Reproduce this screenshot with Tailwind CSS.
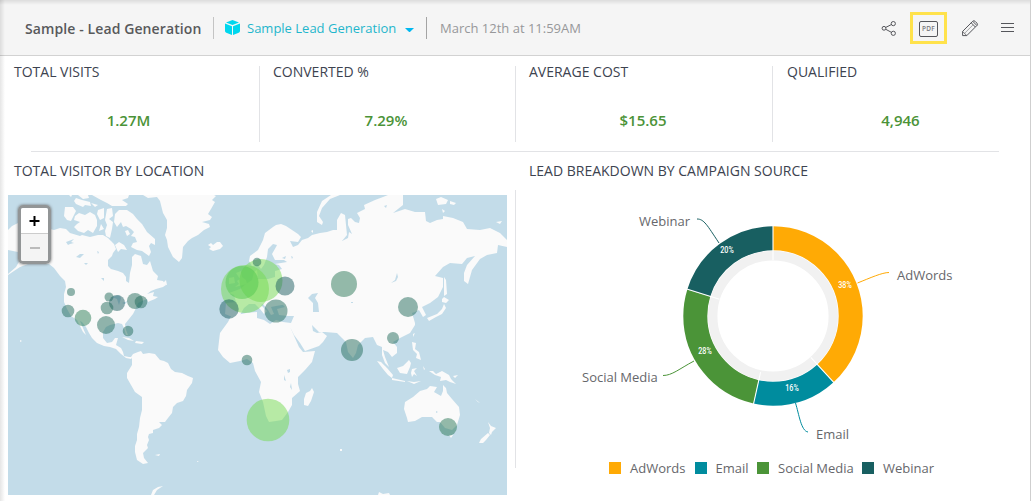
<!DOCTYPE html>
<html lang="en">
<head>
<meta charset="utf-8">
<title>Sample - Lead Generation</title>
<script src="https://cdn.jsdelivr.net/npm/@tailwindcss/browser@4"></script>
</head>
<body class="relative h-[501px] w-[1031px] overflow-hidden border-r border-[#cfcfcf] bg-white font-['Open_Sans',sans-serif]">
<header class="flex h-14 items-center border-b border-[#d2d2d2] bg-[#f5f5f5] pl-[25px] pr-4">
  <h1 class="w-[188px] whitespace-nowrap pt-px text-[14px] font-semibold tracking-[0.1px] text-[#58595b]">Sample - Lead Generation</h1>
  <span class="h-[22px] w-px bg-[#c4c4c4]"></span>
  <svg class="ml-[11px] size-[15px]" viewBox="0 0 15 15" fill="#00d7ee"><path d="M7.5 0 14 2.5 7.5 5 1 2.5ZM0 3.6 7 6.2V15L1.3 12.7Q0 12 0 11ZM15 3.6 8 6.2V15L13.7 12.7Q15 12 15 11Z"/></svg>
  <span class="ml-[7px] w-[150px] whitespace-nowrap pt-0.5 text-[13px] text-[#1fb6cc]">Sample Lead Generation</span>
  <svg class="ml-2 mt-1 h-1 w-[9px]" viewBox="0 0 9 4" fill="#00b8f0"><path d="M0 0H9L5.2 3.7Q4.5 4.2 3.8 3.7Z"/></svg>
  <span class="ml-3 h-[22px] w-px bg-[#a4a4a4]"></span>
  <span class="ml-[13px] whitespace-nowrap pt-0.5 text-[13px] text-[#97989a]">March 12th at 11:59AM</span>
  <div class="ml-auto flex items-center text-[#55565b]">
    <svg class="size-4" viewBox="0 0 16 16" fill="none" stroke="currentColor"><circle cx="3" cy="8.3" r="1.9"/><circle cx="12.3" cy="3.6" r="2.1"/><circle cx="12.3" cy="13.3" r="2.1"/><path d="M4.8 7.4 10.3 4.6M4.8 9.3 10.3 12.3"/></svg>
    <div class="ml-[13px] flex h-8 w-[37px] items-center justify-center border-3 border-[#ffe24b]">
      <span class="mt-0.5 flex h-4 w-[19px] items-center justify-center rounded-xs border border-[#55565b] pt-0.5 text-[6.5px] font-semibold leading-none tracking-[0.2px] text-[#77787c]">PDF</span>
    </div>
    <svg class="ml-[14px] size-[18px]" viewBox="0 0 18 18" fill="none" stroke="currentColor"><path d="M1.6 16.6V12.4L11.7 2.3Q12.9 1.1 14.1 2.3L15.9 4.1Q17.1 5.3 15.9 6.5L5.8 16.6ZM10.2 3.8 14.4 8M11.7 2.3 15.9 6.5"/><path d="M1.6 12.4 5.8 16.6" stroke-width=".8"/><path d="M3.7 14.2 12 5.9" stroke-width=".5"/></svg>
    <svg class="ml-[22px] h-[11px] w-[13px]" viewBox="0 0 13 11" stroke="currentColor"><path d="M0 1.5H13M0 5.5H13M0 9.5H13"/></svg>
  </div>
</header>

<main>
  <section class="flex h-[95px] pt-2.5 text-[#3d4350]">
    <div class="h-[76px] w-[260px] border-r border-[#e2e3e6]"><h2 class="-mt-1 pl-3.5 text-[14px] leading-5">TOTAL VISITS</h2><p class="mt-[26px] pr-0.5 text-center text-[15px] font-semibold leading-6 text-[#4b9338]">1.27M</p></div>
    <div class="h-[76px] w-[256px] border-r border-[#e2e3e6]"><h2 class="-mt-1 pl-[13px] text-[14px] leading-5">CONVERTED %</h2><p class="mt-[26px] pr-[3px] text-center text-[15px] font-semibold leading-6 text-[#4b9338]">7.29%</p></div>
    <div class="h-[76px] w-[257px] border-r border-[#e2e3e6]"><h2 class="-mt-1 pl-[13px] text-[14px] leading-5">AVERAGE COST</h2><p class="mt-[26px] pr-0.5 text-center text-[15px] font-semibold leading-6 text-[#4b9338]">$15.65</p></div>
    <div class="h-[76px] w-[257px]"><h2 class="-mt-1 pl-3.5 text-[14px] leading-5">QUALIFIED</h2><p class="mt-[26px] pr-0.5 text-center text-[15px] font-semibold leading-6 text-[#4b9338]">4,946</p></div>
  </section>
  <hr class="ml-[31px] w-[968px] border-[#e2e3e6]">
  <section class="flex">
    <div class="w-[515px]">
      <h2 class="mt-[9px] h-[34px] pl-3.5 text-[14px] leading-5 text-[#3d4350]">TOTAL VISITOR BY LOCATION</h2>
      <div class="relative ml-2 h-[300px] w-[499px] bg-[#c3dce9]">
        <svg class="block" width="499" height="300" viewBox="8 195 499 300">
          <g fill="#fafafa">
            <!-- North America -->
            <path d="M8 230 12 226 18 223 32 224 44 230 50 229 54 230 60 228 66 229 70 233 80 236 82 235 90 237 98 235 103 235 108 238 111 241 114 244 116 249 113 253 112 256 108 260 108 266 111 269 118 271 123 273 126 277 126 281 129 283 130 273 132 265 132 257 135 254 141 256 143 264 147 265 150 261 153 271 158 276 157 280 163 281 166 285 163 287 156 289 151 291 147 294 154 292 153 296 158 297 155 299 150 301 148 302 147 299 142 301 138 303 136 308 133 314 129 319 125 324 126 330 128 335 126 335 124 328 122 324 118 323 114 324 110 325 106 327 103 332 103 338 107 343 112 342 115 338 118 338 116 345 121 348 123 352 124 356 129 357 132 357 131 359 126 358 121 354 116 349 110 347 104 346 97 343 92 338 89 333 86 327 82 322 80 321 83 328 86 335 83 332 80 326 77 320 71 316 67 309 64 302 64 294 66 287 65 281 60 276 54 268 49 264 42 263 35 262 28 264 20 267 14 271 8 275 8 274 16 267 20 260 18 252 8 250Z"/>
            <path d="M65 207 73 207 76 211 74 215 71 221 67 220 64 216ZM75 216 79 213 85 215 90 212 95 215 97 220 97 226 93 233 88 230 84 233 78 231 74 227 77 224 80 222 74 220ZM69 195H72L71 197ZM76 198 82 200 90 202 91 206 85 205 83 207 76 204 74 201ZM78 195H88L89 198 83 199ZM91 203 98 205 95 207ZM98 210 104 208 104 218 100 220 97 214ZM107 209 112 208 113 216 109 219 113 222 112 229 110 238 106 236 105 231 107 225 105 220ZM101 224 104 229 99 231ZM115 214 119 210 127 210 133 214 137 219 142 224 147 232 155 239 155 245 151 243 149 246 151 252 149 256 142 251 137 250 131 247 133 243 137 242 135 237 131 236 134 232 131 229 126 226 123 227 121 222 117 227 114 222ZM115 245 119 242 124 245 127 250 121 249 118 252ZM125 231 128 230 130 234 127 236ZM92 195H129L128 198 122 200 128 204 126 206 112 206 107 203 101 200Z"/>
            <path d="M162 284 166 280 167 285ZM122 337 129 338 134 341 128 340ZM136 341 144 342 142 344 135 343Z"/>
            <!-- Greenland, Iceland -->
            <path d="M143 195 148 198 157 197 160 201 162 209 163 213 167 220 167 228 165 235 167 240 168 247 173 257 179 262 182 258 183 247 188 241 192 238 198 235 204 230 210 227 209 224 202 222 210 220 212 217 208 214 211 209 215 202 212 200 216 196 214 195Z"/>
            <path d="M208 245 211 243 213 245 217 242 220 242 223 246 220 249 213 251 209 249 211 247Z"/>
            <!-- South America -->
            <path d="M131 357 133 354 138 352 141 351 143 354 149 353 155 354 160 360 164 361 168 363 171 369 175 372 182 373 188 376 193 378 192 383 187 390 186 396 183 401 177 403 173 407 172 413 168 418 165 422 159 422 162 425 159 428 153 430 153 433 149 434 148 437 149 440 147 445 148 448 143 453 144 458 148 463 143 464 137 460 135 452 135 446 137 440 137 434 139 427 140 418 142 410 142 397 135 392 131 385 127 378 127 373 132 365 132 359ZM155 455 160 454 159 456ZM151 495 153 490 158 487 163 486 157 490 154 495Z"/>
            <!-- Europe, Asia and Africa -->
            <path d="M250 256 258 250 260 246 263 240 265 233 273 227 276 225 281 224 286 226 292 230 298 234 301 237 298 242 290 241 293 247 298 245 302 240 308 238 312 235 320 233 327 232 333 230 337 230 337 220 341 213 345 215 346 225 347 235 342 241 348 238 349 232 352 234 348 225 348 219 351 218 355 222 359 223 360 218 357 213 365 209 364 205 375 200 383 197 388 195H403L403 205 393 213 405 209 415 212 425 212 426 221 430 223 437 220 443 219 443 216 453 218 463 222 467 229 480 230 490 228 500 233 507 240V247L498 245 497 253 487 255 480 259 472 270 468 284 464 281 464 273 467 265 475 256 467 258 462 264 450 263 443 267 435 276 443 278 443 287 438 297 430 303 422 307 426 315 423 317 419 310 415 312 412 313 415 323 415 325 410 333 400 338 393 342 397 347 397 353 392 357 388 352 383 350 385 357 389 367 385 363 382 355 382 347 377 345 373 337 365 338 358 345 356 353 353 358 348 352 346 342 342 338 337 333 325 332 319 332 312 325 313 331 317 333 322 332 327 336 323 342 319 346 305 351 300 343 294 335 290 327 295 338 299 347 303 352 315 351 312 362 305 370 298 377 298 384 300 391 292 398 292 405 288 412 282 420 276 421 269 422 266 416 263 402 259 392 261 382 255 371 253 363 247 359 240 361 230 363 223 357 218 350 219 341 220 333 228 322 231 316 237 315 246 313 257 312 257 318 264 320 270 324 276 320 283 322 291 323 294 316 288 316 279 315 277 309 285 307 282 304 283 298 288 297 292 293 291 297 295 300 300 302 299 305 291 304 282 305 276 306 271 307 274 314 271 315 268 310 263 304 261 305 267 311 264 314 260 309 255 304 249 304 244 308 240 315 230 316 225 314 226 303 236 302 234 295 229 293 240 289 246 284 252 280 254 272 257 270 258 279 268 279 275 277 275 271 282 269 279 265 275 264 287 262 284 260 275 260 272 254 276 247 277 245 273 244 268 249 267 257 264 265 261 269 258 265 252 266 249 261Z"/>
            <path d="M235 287 239 284 237 281 240 279 236 273 241 271 242 277 246 280 247 284ZM229 278 234 277 235 283 229 284ZM317 222 322 225 323 222 319 216 322 208 330 199 340 195H331L322 201 317 212ZM436 199 441 197 448 200 446 204 438 205ZM450 201 456 203 454 205 450 204ZM442 209 445 211 443 213ZM496 222 502 221 500 224ZM311 231 313 230 313 233Z"/>
            <path d="M444 277 446 280 447 294 444 296ZM442 299 444 297 449 300 446 303 442 302ZM444 304 446 308 442 314 436 317 429 321 427 318 437 314 442 309ZM413 334 415 333 413 337ZM412 342 416 343 415 349 419 352 421 360 416 358 417 354 413 350Z"/>
            <!-- Southeast Asia and Oceania -->
            <path d="M377 361 381 362 387 368 393 375 392 378 388 375 383 369ZM392 378 405 381 405 382 392 380ZM397 368 403 366 409 360 411 363 410 367 407 374 400 373ZM412 369 417 368 414 371 417 376 414 374 412 377 411 373ZM407 381 414 382 421 381 414 384ZM423 366 425 369 424 370ZM429 371 433 371 436 374 442 371 449 375 451 379 456 384 450 382 446 380 440 381 441 377 435 375ZM453 376 458 375 455 378Z"/>
            <path d="M405 402 413 397 420 391 427 389 430 386 437 387 434 392 441 396 443 391 443 385 446 388 447 393 452 399 459 407 460 415 457 425 452 430 445 428 440 422 437 422 432 417 422 417 415 421 408 422 407 418 404 409ZM449 435 453 435 451 438ZM488 422 491 426 496 428 492 432 491 435 489 433 490 428ZM488 433 490 435 486 440 483 443 479 443 481 439ZM312 388 314 392 311 401 308 406 304 405 304 399 306 393 310 391Z"/>
            <path d="M378 495 379 492 383 494 389 493 390 495ZM475 399 480 403 478 402ZM340 449H342V451H340ZM20 340 22 341 20 342ZM197 461 199 462H197Z"/>
          </g>
          <g fill="#c3dce9">
            <path d="M312 294 318 293 315 298 318 303 319 312 313 312 313 303 308 298ZM391 283 395 280 397 273 398 277 396 281ZM66 242 74 239 71 242 74 243 70 244 68 245ZM76 257 80 254 84 254 80 258ZM84 263 88 263 86 265ZM97 251 99 252 98 254ZM101 278 104 278 104 281ZM112 297 119 295 121 298 119 305 117 299ZM122 303 128 301 125 304ZM287 370 290 369 290 372 288 373ZM284 375 286 381 284 380ZM291 383 292 390 290 387ZM282 258 286 256 285 259ZM291 256 293 257 292 259ZM384 206 387 205 386 208ZM351 302H353V303H351ZM436 411 438 412 436 413Z"/>
          </g>
          <g fill="#74da50" fill-opacity=".5">
            <circle cx="245" cy="289" r="24"/><circle cx="261" cy="280.5" r="21.5"/><circle cx="268" cy="420" r="21.3"/><circle cx="242" cy="282.5" r="16.5" fill="#54c850"/>
          </g>
          <g fill="#246c5c" fill-opacity=".5">
            <circle cx="71" cy="292" r="4"/><circle cx="68" cy="311" r="6.3"/><circle cx="83" cy="318" r="8.3" fill="#2c7d55"/><circle cx="109" cy="297" r="4.5"/><circle cx="117" cy="303" r="8" fill="#1c5c60"/><circle cx="107" cy="308" r="6.3"/><circle cx="135" cy="301" r="8"/><circle cx="141" cy="302" r="6.3"/><circle cx="106" cy="325" r="9"/><circle cx="128" cy="331" r="5.3"/><circle cx="247" cy="360" r="5.3"/><circle cx="229" cy="309" r="9.7" fill="#1c5c60"/><circle cx="257" cy="262" r="4.3"/><circle cx="285" cy="286" r="9.5" fill="#1c5c60"/><circle cx="276" cy="311" r="11.5"/><circle cx="344" cy="284" r="13" fill="#2c7858"/><circle cx="408" cy="307" r="10"/><circle cx="352" cy="350" r="11"/><circle cx="393" cy="338" r="6"/><circle cx="448" cy="427" r="9" fill="#2c7858"/>
          </g>
        </svg>
        <div class="absolute left-[10px] top-[10px] flex h-[59px] w-[33px] flex-col overflow-hidden rounded-[5px] border-3 border-[#929596] shadow-[0_0_3px_#666]">
          <span class="flex h-[26px] items-center justify-center border-b border-[#ccc] bg-white"><svg class="size-[11px]" viewBox="0 0 11 11" stroke="#000" stroke-width="2"><path d="M.5 6H10.5M5.5 1V11"/></svg></span>
          <span class="flex flex-1 items-center justify-center bg-[#f4f4f4]"><svg class="h-0.5 w-[10px]" viewBox="0 0 10 2"><path d="M0 1H10" stroke="#bbb" stroke-width="2"/></svg></span>
        </div>
      </div>
    </div>
    <div class="mt-[38px] h-[278px] w-px bg-[#e2e3e6]"></div>
    <div class="flex-1">
      <h2 class="mt-[9px] h-[34px] pl-[13px] text-[14px] leading-5 text-[#3d4350]">LEAD BREAKDOWN BY CAMPAIGN SOURCE</h2>
      <svg class="block" width="514" height="260" viewBox="516 195 514 260">
        <g fill="none" stroke-width="24" transform="rotate(-90 773 316)">
          <circle cx="773" cy="316" r="77.7" pathLength="100" stroke="#ffaa05" stroke-dasharray="38.2 61.8"/>
          <circle cx="773" cy="316" r="77.7" pathLength="100" stroke="#008c9e" stroke-dasharray="15.3 84.7" stroke-dashoffset="-38.2"/>
          <circle cx="773" cy="316" r="77.7" pathLength="100" stroke="#4b9438" stroke-dasharray="26.3 73.7" stroke-dashoffset="-53.5"/>
          <circle cx="773" cy="316" r="77.7" pathLength="100" stroke="#185f61" stroke-dasharray="20.2 79.8" stroke-dashoffset="-79.8"/>
        </g>
        <circle cx="773" cy="316" r="60.3" fill="none" stroke="#f1f1f1" stroke-width="9.4"/>
        <path d="M773 260V225M810.8 357.3 834.2 382.8M760.6 372.2 753.3 405M719.5 299.3 686 288.8" stroke="#fff" stroke-width="1.1"/>
        <g fill="none">
          <path d="M697 219C704 219 707 225 719 243" stroke="#185f61"/>
          <path d="M663 375.5C672 375.5 679 369 694 361" stroke="#4b9438"/>
          <path d="M857.5 283C870 278 882 272.5 889 272.5" stroke="#ffaa05"/>
          <path d="M795.5 403C799 414 801 431 808 432" stroke="#008c9e"/>
        </g>
        <g class="text-[13px]" fill="#66676b">
          <text x="639" y="226">Webinar</text><text x="582" y="382">Social Media</text><text x="897" y="280">AdWords</text><text x="816" y="439">Email</text>
        </g>
        <g class="font-['Roboto'] text-[8.5px] font-medium" fill="#fff" text-anchor="middle">
          <text x="727" y="253" textLength="13.5" lengthAdjust="spacingAndGlyphs">20%</text><text x="705" y="354" textLength="13.5" lengthAdjust="spacingAndGlyphs">28%</text><text x="845" y="288" textLength="13.5" lengthAdjust="spacingAndGlyphs">38%</text><text x="792" y="391" textLength="13.5" lengthAdjust="spacingAndGlyphs">16%</text>
        </g>
      </svg>
      <ul class="flex h-[26px] items-center pl-[93px] text-[13px] text-[#66676b]">
        <li class="flex w-[85.5px] items-center gap-[9px] whitespace-nowrap"><i class="size-3 shrink-0 bg-[#ffaa05]"></i><span class="pt-px">AdWords</span></li>
        <li class="flex w-[62.5px] items-center gap-[9px] whitespace-nowrap"><i class="size-3 shrink-0 bg-[#008c9e]"></i><span class="pt-px">Email</span></li>
        <li class="flex w-[105px] items-center gap-[9px] whitespace-nowrap"><i class="size-3 shrink-0 bg-[#4b9438]"></i><span class="pt-px">Social Media</span></li>
        <li class="flex items-center gap-[9px] whitespace-nowrap"><i class="size-3 shrink-0 bg-[#185f61]"></i><span class="pt-px">Webinar</span></li>
      </ul>
    </div>
  </section>
</main>
<div class="pointer-events-none absolute inset-y-0 left-0 w-[5px] bg-linear-to-r from-black/10 to-transparent"></div>
<div class="pointer-events-none absolute inset-x-0 top-0 h-[5px] bg-linear-to-b from-black/10 to-transparent"></div>
</body>
</html>
